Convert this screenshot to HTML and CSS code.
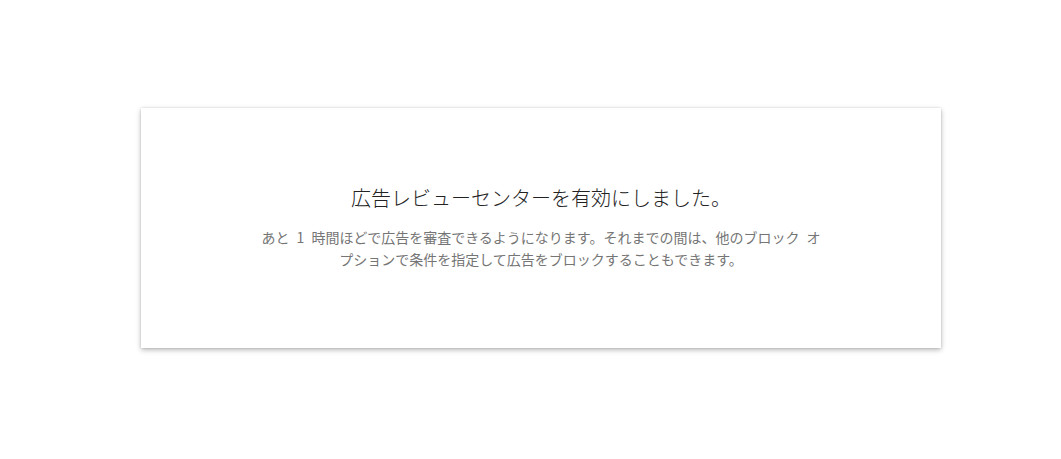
FILE: index.html
```html
<!DOCTYPE html>
<html lang="ja">
<head>
    <meta charset="UTF-8">
    <title>広告レビューセンター</title>
    <link rel="stylesheet" href="styles.css">
</head>
<body>
    <div class="card">
        <h2 class="title">広告レビューセンターを有効にしました。</h2>
        <p class="message">あと 1 時間ほどで広告を審査できるようになります。それまでの間は、他のブロック オプションで条件を指定して広告をブロックすることもできます。</p>
    </div>
</body>
</html>
```

FILE: styles.css
```css
* {
    margin: 0;
    padding: 0;
    box-sizing: border-box;
}

html, body {
    height: 100%;
}

body {
    background: #fff;
    font-family: "Noto Sans CJK JP", "Noto Sans", sans-serif;
    padding-top: 108px;
}

.card {
    width: 800px;
    height: 240px;
    margin-left: 141px;
    background: #fff;
    box-shadow: 0 0 2px rgba(0, 0, 0, 0.12), 0 2px 5px rgba(0, 0, 0, 0.28);
    display: flex;
    flex-direction: column;
    align-items: center;
    justify-content: center;
    text-align: center;
    padding-bottom: 2px;
}

.title {
    font-size: 20px;
    font-weight: 300;
    color: #222;
    line-height: 26px;
    margin-bottom: 15px;
}

.message {
    font-size: 14px;
    font-weight: 400;
    color: #757575;
    line-height: 22px;
    word-spacing: 4px;
    max-width: 566px;
}
```
